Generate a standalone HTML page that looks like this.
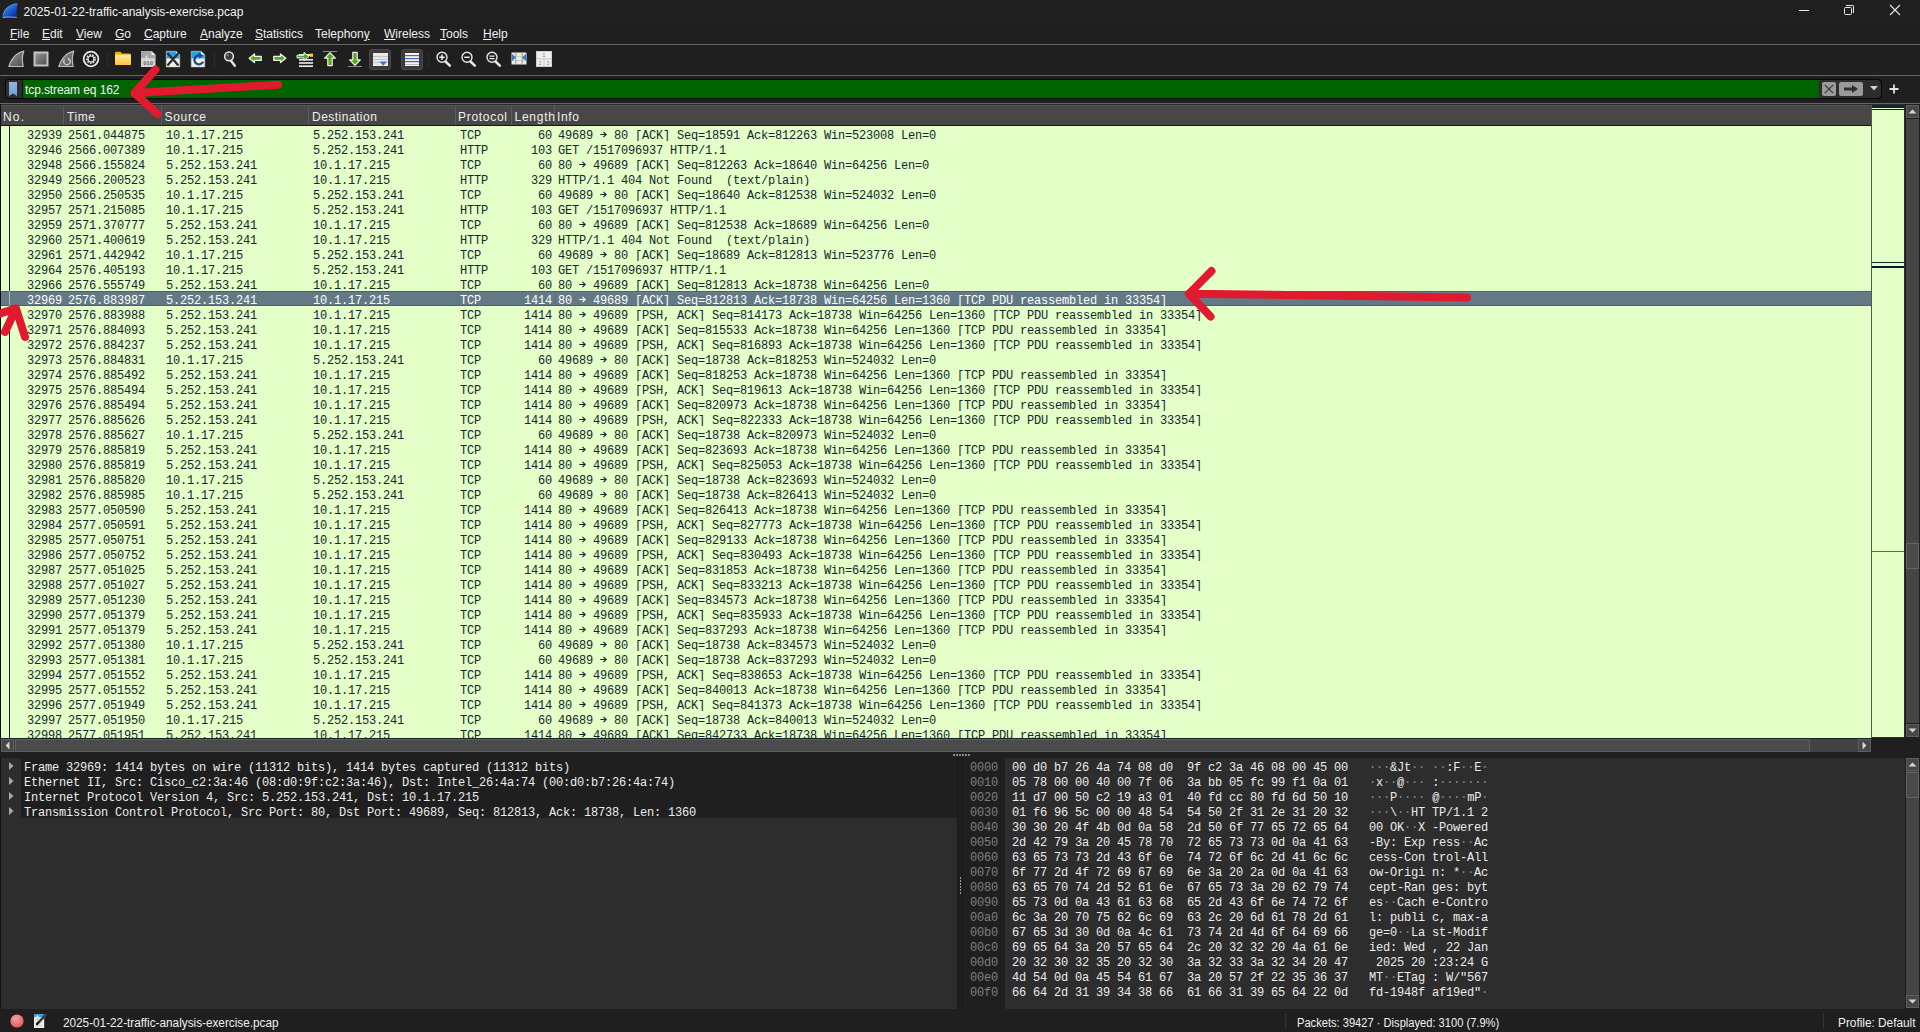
<!DOCTYPE html><html><head><meta charset="utf-8"><title>Wireshark</title><style>
*{margin:0;padding:0;box-sizing:border-box}
html,body{width:1920px;height:1032px;overflow:hidden;background:#1f1f1f}
body{position:relative;font-family:"Liberation Sans",sans-serif;font-size:12px;color:#e6e6e6}
.a{position:absolute}
.t{position:absolute;white-space:pre;line-height:15px}
.mn{font-family:"Liberation Mono",monospace;font-size:12px;letter-spacing:-0.2px}
.menu span{position:absolute;top:24px;line-height:20px;white-space:pre;color:#f0f0f0}
.menu span b{font-weight:normal;text-decoration:underline;text-underline-offset:1px}
.hd{position:absolute;top:106px;height:20px;line-height:22px;white-space:pre;color:#f0f0f0}
.hs{position:absolute;top:105px;width:1px;height:20px;background:#5c5c5c}
.r{position:absolute;left:1px;width:1870px;height:15px;background:#e4ffc7;color:#12272e;font-family:"Liberation Mono",monospace;font-size:12px;letter-spacing:-0.2px;line-height:15px;white-space:pre}
.r i{position:absolute;top:3px;font-style:normal}
.r .R{text-align:right}
.sel{background:#637985;color:#fff;box-shadow:inset 0 1px 0 #4c5f6e,inset 0 -1px 0 #4c5f6e}
.hx{position:absolute;white-space:pre;line-height:15px;font-family:"Liberation Mono",monospace;font-size:12px;letter-spacing:-0.2px;margin-top:3px}
.dot{color:#8a8a8a}
</style></head><body><div class="a" style="left:0;top:0;width:1920px;height:24px;background:#202020"></div><svg class="a" style="left:0;top:0" width="20" height="20" viewBox="0 0 20 20"><defs><linearGradient id="fin" x1="0.1" y1="0.1" x2="0.7" y2="0.9"><stop offset="0" stop-color="#3f95ff"/><stop offset="1" stop-color="#0736a8"/></linearGradient></defs><path d="M2.3 17.8 C2.8 10.5 7 4.2 17.8 3.2 C16.6 7 16.3 12 16.9 17.8 Z" fill="url(#fin)"/><path d="M2.8 17.4 C7 16.9 12 16.9 16.8 17.4" stroke="#9cc4ff" stroke-width="1" fill="none" opacity=".8"/><path d="M3.2 15.5 C4 10 8 5 16.5 3.8" stroke="#7fb6ff" stroke-width=".8" fill="none" opacity=".6"/></svg><div class="t" style="left:23.5px;top:4px;line-height:16px;color:#f2f2f2">2025-01-22-traffic-analysis-exercise.pcap</div><div class="a" style="left:1799px;top:10px;width:10px;height:1px;background:#e8e8e8"></div><div class="a" style="left:1844px;top:7px;width:8px;height:8px;border:1px solid #e8e8e8;border-radius:1.5px"></div><div class="a" style="left:1846px;top:5px;width:8px;height:8px;border-top:1px solid #e8e8e8;border-right:1px solid #e8e8e8;border-radius:0 2px 0 0"></div><svg class="a" style="left:1889px;top:4px" width="12" height="12" viewBox="0 0 12 12"><path d="M1 1 L11 11 M11 1 L1 11" stroke="#e8e8e8" stroke-width="1.1"/></svg><div class="menu"><span style="left:10px"><b>F</b>ile</span><span style="left:42px"><b>E</b>dit</span><span style="left:76px"><b>V</b>iew</span><span style="left:115px"><b>G</b>o</span><span style="left:144px"><b>C</b>apture</span><span style="left:200px"><b>A</b>nalyze</span><span style="left:255px"><b>S</b>tatistics</span><span style="left:315px">Telephon<b>y</b></span><span style="left:384px"><b>W</b>ireless</span><span style="left:440px"><b>T</b>ools</span><span style="left:483px"><b>H</b>elp</span></div><div class="a" style="left:0;top:44px;width:1920px;height:1px;background:#666"></div><div class="a" style="left:0;top:75px;width:1920px;height:1px;background:#666"></div><div class="a" style="left:0;top:103px;width:1920px;height:1px;background:#666"></div><svg class="a" style="left:7px;top:50px" width="18" height="18" viewBox="0 0 18 18"><defs><linearGradient id="g1" x1="0" y1="0" x2="1" y2="1"><stop offset="0" stop-color="#9a9a9a"/><stop offset="1" stop-color="#4c4c4c"/></linearGradient><linearGradient id="gy" x1="0" y1="0" x2="0" y2="1"><stop offset="0" stop-color="#ffe9a8"/><stop offset="1" stop-color="#fdc43c"/></linearGradient><linearGradient id="gd" x1="0" y1="0" x2="0" y2="1"><stop offset="0" stop-color="#9c9c9c"/><stop offset="1" stop-color="#d8d8d8"/></linearGradient></defs><path d="M1.8 16.5 C3.5 10 8.5 3 16.8 1 C15 6 15 11.5 16.2 16.5 Z" fill="url(#g1)" stroke="#bdbdbd" stroke-width="1.2" stroke-linejoin="round"/></svg><svg class="a" style="left:33px;top:51px" width="16" height="16" viewBox="0 0 16 16"><rect x="1.5" y="1.5" width="13" height="13" fill="url(#g1)" stroke="#c4c4c4" stroke-width="2"/></svg><svg class="a" style="left:57px;top:50px" width="18" height="18" viewBox="0 0 18 18"><path d="M1.8 16.5 C3.5 10 8.5 3 16.8 1 C15 6 15 11.5 16.2 16.5 Z" fill="url(#g1)" stroke="#bdbdbd" stroke-width="1.2" stroke-linejoin="round"/><path d="M7.5 9.5 A3.2 3.2 0 1 0 12 9" fill="none" stroke="#c8c8c8" stroke-width="1.3"/><path d="M10.5 7.5 L12.8 8.7 L11.3 10.8Z" fill="#c8c8c8"/></svg><svg class="a" style="left:82px;top:50px" width="18" height="18" viewBox="0 0 18 18"><circle cx="9" cy="9" r="7.3" fill="none" stroke="#e8e8e8" stroke-width="1.8"/><circle cx="9" cy="9" r="3.9" fill="none" stroke="#e0e0e0" stroke-width="2.2" stroke-dasharray="1.6 1.1"/><circle cx="9" cy="9" r="3" fill="none" stroke="#e0e0e0" stroke-width="1.2"/><circle cx="9" cy="9" r="1.6" fill="#111"/></svg><div class="a" style="left:107px;top:52px;width:1px;height:16px;background:#2c2c2c"></div><svg class="a" style="left:114px;top:51px" width="18" height="15" viewBox="0 0 18 15"><path d="M1 2 Q1 0.8 2.2 0.8 L6.5 0.8 L8 2.6 L15.8 2.6 Q17 2.6 17 3.8 L17 12.8 Q17 14 15.8 14 L2.2 14 Q1 14 1 12.8Z" fill="#f1b00a"/><path d="M1 4.6 Q1 3.7 2 3.7 L16 3.7 Q17 3.7 17 4.6 L17 12.8 Q17 14 15.8 14 L2.2 14 Q1 14 1 12.8Z" fill="url(#gy)"/></svg><svg class="a" style="left:140px;top:50px" width="17" height="18" viewBox="0 0 17 18"><path d="M1 1 L11.5 1 L15.5 5 L15.5 17 L1 17Z" fill="#d6d6d6"/><path d="M1 1 L11.5 1 L15.5 5 L15.5 8.2 L1 8.2Z" fill="#a6a6a6"/><path d="M5 8.2 L7 4.5 L7.6 8.2Z" fill="#e4e4e4"/><path d="M11.5 1 L11.5 5 L15.5 5Z" fill="#ececec"/><text x="8.2" y="14.6" font-family="Liberation Mono" font-weight="bold" font-size="5.6" fill="#6e6e6e" text-anchor="middle">010</text></svg><svg class="a" style="left:165px;top:50px" width="16" height="18" viewBox="0 0 16 18"><path d="M1.2 1.2 L11 1.2 L14.8 5 L14.8 17 L1.2 17Z" fill="#f3f1e2" stroke="#bcb9a6" stroke-width=".5"/><path d="M1.4 1.4 L11 1.4 L14.6 5 L14.6 8.6 L1.4 8.6Z" fill="#2d9fe8"/><path d="M11 1.3 L11 5 L14.7 5Z" fill="#f6f4ea"/><path d="M2.4 3 L13.4 15.6 M13.4 3 L2.4 15.6" stroke="#2e2e2e" stroke-width="2.3"/></svg><svg class="a" style="left:190px;top:50px" width="16" height="18" viewBox="0 0 16 18"><path d="M1.2 1.2 L11 1.2 L14.8 5 L14.8 17 L1.2 17Z" fill="#f3f1e2" stroke="#bcb9a6" stroke-width=".5"/><path d="M1.4 1.4 L11 1.4 L14.6 5 L14.6 8.6 L1.4 8.6Z" fill="#2d9fe8"/><path d="M11 1.3 L11 5 L14.7 5Z" fill="#f6f4ea"/><path d="M10.5 5.8 A4.4 4.4 0 1 0 13 11.6" fill="none" stroke="#1b449f" stroke-width="2.4"/><path d="M8.3 2.6 L13.2 5.2 L9.6 8.6Z" fill="#1b449f"/></svg><div class="a" style="left:214px;top:52px;width:1px;height:16px;background:#2c2c2c"></div><svg class="a" style="left:223px;top:50px" width="14" height="18" viewBox="0 0 14 18"><path d="M7.5 10 L11.8 15.8" stroke="#e6e6e6" stroke-width="2.4" stroke-linecap="round"/><circle cx="6" cy="6.3" r="4.4" fill="#3a3a3a" stroke="#e8e8e8" stroke-width="1.5"/><circle cx="4.8" cy="5.2" r="1.2" fill="#777"/></svg><svg class="a" style="left:248px;top:53px" width="15" height="11" viewBox="0 0 15 11"><path d="M1.2 5.2 L6.5 0.9 L6.5 3.3 L13.2 3.3 L13.2 7.4 L6.5 7.4 L6.5 9.6Z" fill="#55a81c" stroke="#f2f2f2" stroke-width="1.3" stroke-linejoin="round"/></svg><svg class="a" style="left:272px;top:53px" width="15" height="11" viewBox="0 0 15 11"><g transform="translate(15,0) scale(-1,1)"><path d="M1.2 5.2 L6.5 0.9 L6.5 3.3 L13.2 3.3 L13.2 7.4 L6.5 7.4 L6.5 9.6Z" fill="#55a81c" stroke="#f2f2f2" stroke-width="1.3" stroke-linejoin="round"/></g></svg><svg class="a" style="left:296px;top:51px" width="18" height="17" viewBox="0 0 18 17"><rect x="3" y="3" width="14" height="2" fill="#eee"/><rect x="3" y="8" width="14" height="1.6" fill="#eee"/><rect x="3" y="11.2" width="14" height="1.6" fill="#eee"/><rect x="3" y="14.4" width="14" height="1.6" fill="#eee"/><rect x="13.8" y="2.6" width="3.2" height="3.2" fill="#f6d21c"/><path d="M1 4.2 L8 4.2 L8 1.3 L13 5.5 L8 9.7 L8 6.9 L1 6.9Z" fill="#55a81c" stroke="#f2f2f2" stroke-width="1" stroke-linejoin="round"/></svg><svg class="a" style="left:322px;top:51px" width="16" height="16" viewBox="0 0 16 16"><rect x="1" y="0" width="14" height="1" fill="#8a8a8a"/><path d="M8 1.6 L13.3 7.2 L10.2 7.2 L10.2 14.6 L5.8 14.6 L5.8 7.2 L2.7 7.2Z" fill="#55a81c" stroke="#f2f2f2" stroke-width="1.2" stroke-linejoin="round"/></svg><svg class="a" style="left:347px;top:51px" width="16" height="16" viewBox="0 0 16 16"><rect x="1" y="15" width="14" height="1" fill="#8a8a8a"/><path d="M8 14.4 L13.3 8.8 L10.2 8.8 L10.2 1.4 L5.8 1.4 L5.8 8.8 L2.7 8.8Z" fill="#55a81c" stroke="#f2f2f2" stroke-width="1.2" stroke-linejoin="round"/></svg><div class="a" style="left:369px;top:49px;width:22px;height:21px;background:#3b3b3b;border:1px solid #4b4b4b;border-radius:3px"></div><svg class="a" style="left:373px;top:53px" width="15" height="13" viewBox="0 0 15 13"><rect x="0" y="0" width="15" height="13" fill="#e9e9e9"/><rect x="0" y="3" width="15" height=".8" fill="#bcbcbc"/><rect x="0" y="6" width="15" height=".8" fill="#bcbcbc"/><rect x="0" y="9" width="15" height=".8" fill="#bcbcbc"/><path d="M6.5 8.5 L14 8.5 L10.2 12.8Z" fill="#3a78c9"/></svg><div class="a" style="left:401px;top:49px;width:22px;height:21px;background:#3b3b3b;border:1px solid #4b4b4b;border-radius:3px"></div><svg class="a" style="left:405px;top:53px" width="14" height="13" viewBox="0 0 14 13"><rect x="0" y="0" width="14" height="13" fill="#f4f4f4"/><rect x="0" y="2" width="14" height="1.2" fill="#e03030"/><rect x="0" y="5" width="14" height="1.2" fill="#3a6fc8"/><rect x="0" y="8" width="14" height="1.2" fill="#7a4a9a"/><rect x="0" y="11" width="14" height="1" fill="#bbb"/></svg><div class="a" style="left:428px;top:52px;width:1px;height:16px;background:#2c2c2c"></div><svg class="a" style="left:436px;top:51px" width="16" height="16" viewBox="0 0 16 16"><path d="M8.5 9.5 L13.8 14.6" stroke="#e8e8e8" stroke-width="2.6" stroke-linecap="round"/><circle cx="6" cy="6.3" r="5" fill="#1f1f1f" stroke="#e8e8e8" stroke-width="1.4"/><path d="M3.3 6.3 L8.7 6.3 M6 3.6 L6 9" stroke="#eee" stroke-width="1.5"/></svg><svg class="a" style="left:461px;top:51px" width="16" height="16" viewBox="0 0 16 16"><path d="M8.5 9.5 L13.8 14.6" stroke="#e8e8e8" stroke-width="2.6" stroke-linecap="round"/><circle cx="6" cy="6.3" r="5" fill="#1f1f1f" stroke="#e8e8e8" stroke-width="1.4"/><path d="M3.3 6.3 L8.7 6.3" stroke="#eee" stroke-width="1.5"/></svg><svg class="a" style="left:486px;top:51px" width="16" height="16" viewBox="0 0 16 16"><path d="M8.5 9.5 L13.8 14.6" stroke="#e8e8e8" stroke-width="2.6" stroke-linecap="round"/><circle cx="6" cy="6.3" r="5" fill="#1f1f1f" stroke="#e8e8e8" stroke-width="1.4"/><path d="M3.5 5.2 L8.5 5.2 M3.5 7.6 L8.5 7.6" stroke="#eee" stroke-width="1.2"/></svg><svg class="a" style="left:511px;top:52px" width="16" height="13" viewBox="0 0 16 13"><rect x="0.5" y="0.5" width="15" height="12" fill="#eceae0"/><rect x="0.5" y="4" width="15" height=".7" fill="#c7c4b5"/><rect x="0.5" y="8" width="15" height=".7" fill="#c7c4b5"/><rect x="4.3" y="0" width="1" height="13" fill="#9a9a9a"/><rect x="10.7" y="0" width="1" height="13" fill="#9a9a9a"/><path d="M1 2 L5 5.5 L1 9Z" fill="#3a78c9"/><path d="M15 2 L11 5.5 L15 9Z" fill="#3a78c9"/></svg><svg class="a" style="left:536px;top:51px" width="16" height="16" viewBox="0 0 16 16"><rect x="0.5" y="0.5" width="15" height="15" fill="#efefef" stroke="#cfcfcf"/><rect x="0.5" y="7.5" width="15" height="0.8" fill="#bbb"/><rect x="7.6" y="8" width="0.8" height="8" fill="#bbb"/><text x="8" y="6" font-size="5" font-family="Liberation Sans" fill="#777" text-anchor="middle">1</text><text x="4" y="14" font-size="5" font-family="Liberation Sans" fill="#888" text-anchor="middle">2</text><text x="12" y="14" font-size="5" font-family="Liberation Sans" fill="#888" text-anchor="middle">3</text></svg><div class="a" style="left:5px;top:79px;width:1877px;height:20px;background:#080808;border-radius:4px"></div><div class="a" style="left:6px;top:80px;width:16px;height:18px;background:#2e2e2e;border-radius:3px 0 0 3px"></div><svg class="a" style="left:8px;top:81px" width="10" height="16" viewBox="0 0 10 16"><defs><linearGradient id="bm" x1="0" y1="0" x2="0" y2="1"><stop offset="0" stop-color="#8fb6e4"/><stop offset="1" stop-color="#6f9fd8"/></linearGradient></defs><path d="M1 1 L9 1 L9 15 L5 12.6 L1 15Z" fill="url(#bm)"/></svg><div class="a" style="left:23px;top:80px;width:1796px;height:18px;background:#006400"></div><div class="t" style="left:25px;top:82px;line-height:16px;color:#f4f4f4;letter-spacing:-0.1px">tcp.stream eq 162</div><div class="a" style="left:1819px;top:80px;width:62px;height:18px;background:#2c2c2c;border-radius:0 4px 4px 0"></div><div class="a" style="left:1822px;top:82px;width:14px;height:14px;background:#9a9a9a;border-radius:2px"></div><svg class="a" style="left:1824px;top:84px" width="10" height="10" viewBox="0 0 10 10"><path d="M.8 .8 L9.2 9.2 M9.2 .8 L.8 9.2" stroke="#3a3a3a" stroke-width="1.2"/></svg><div class="a" style="left:1839px;top:82px;width:24px;height:14px;background:#9a9a9a;border-radius:2px"></div><svg class="a" style="left:1843px;top:84px" width="16" height="10" viewBox="0 0 16 10"><path d="M1 3.5 L9 3.5 L9 1 L15 5 L9 9 L9 6.5 L1 6.5Z" fill="#2e2e2e"/></svg><svg class="a" style="left:1870px;top:86px" width="8" height="5" viewBox="0 0 8 5"><path d="M0 0 L8 0 L4 4.5Z" fill="#d0d0d0"/></svg><svg class="a" style="left:1889px;top:84px" width="10" height="10" viewBox="0 0 10 10"><path d="M5 .5 L5 9.5 M.5 5 L9.5 5" stroke="#e0e0e0" stroke-width="1.8"/></svg><div class="a" style="left:0;top:104px;width:1905px;height:635px;background:#2a2a2a"></div><div class="a" style="left:0;top:104px;width:1px;height:635px;background:#0d0d0d"></div><div class="a" style="left:1px;top:105px;width:1870px;height:20px;background:#474747"></div><div class="a" style="left:1px;top:125px;width:1870px;height:1px;background:#151515"></div><div class="a" style="left:1px;top:105px;width:1870px;height:1px;background:#545454"></div><div class="hs" style="left:63px"></div><div class="hs" style="left:161px"></div><div class="hs" style="left:308px"></div><div class="hs" style="left:455px"></div><div class="hs" style="left:511px"></div><div class="hs" style="left:554px"></div><div class="hd" style="left:3px;letter-spacing:1.2px">No.</div><div class="hd" style="left:67px;letter-spacing:0.6px">Time</div><div class="hd" style="left:164.5px;letter-spacing:0.7px">Source</div><div class="hd" style="left:312px;letter-spacing:0.48px">Destination</div><div class="hd" style="left:458px;letter-spacing:0.7px">Protocol</div><div class="hd" style="left:514.5px;letter-spacing:0.75px">Length</div><div class="hd" style="left:557px;letter-spacing:0.6px">Info</div><div class="r" style="top:126px"><i style="left:26px">32939</i><i style="left:67px">2561.044875</i><i style="left:165px">10.1.17.215</i><i style="left:312px">5.252.153.241</i><i style="left:459px">TCP</i><i class="R" style="right:1319px">60</i><i style="left:557px">49689 <svg width="7" height="7" viewBox="0 0 7 7" style="position:relative;top:-1px"><path d="M0.3 3.5 L6.3 3.5 M3.4 0.9 L6.2 3.5 L3.4 6.1" stroke="currentColor" stroke-width="1.1" fill="none"/></svg> 80 [ACK] Seq=18591 Ack=812263 Win=523008 Len=0</i></div><div class="r" style="top:141px"><i style="left:26px">32946</i><i style="left:67px">2566.007389</i><i style="left:165px">10.1.17.215</i><i style="left:312px">5.252.153.241</i><i style="left:459px">HTTP</i><i class="R" style="right:1319px">103</i><i style="left:557px">GET /1517096937 HTTP/1.1</i></div><div class="r" style="top:156px"><i style="left:26px">32948</i><i style="left:67px">2566.155824</i><i style="left:165px">5.252.153.241</i><i style="left:312px">10.1.17.215</i><i style="left:459px">TCP</i><i class="R" style="right:1319px">60</i><i style="left:557px">80 <svg width="7" height="7" viewBox="0 0 7 7" style="position:relative;top:-1px"><path d="M0.3 3.5 L6.3 3.5 M3.4 0.9 L6.2 3.5 L3.4 6.1" stroke="currentColor" stroke-width="1.1" fill="none"/></svg> 49689 [ACK] Seq=812263 Ack=18640 Win=64256 Len=0</i></div><div class="r" style="top:171px"><i style="left:26px">32949</i><i style="left:67px">2566.200523</i><i style="left:165px">5.252.153.241</i><i style="left:312px">10.1.17.215</i><i style="left:459px">HTTP</i><i class="R" style="right:1319px">329</i><i style="left:557px">HTTP/1.1 404 Not Found  (text/plain)</i></div><div class="r" style="top:186px"><i style="left:26px">32950</i><i style="left:67px">2566.250535</i><i style="left:165px">10.1.17.215</i><i style="left:312px">5.252.153.241</i><i style="left:459px">TCP</i><i class="R" style="right:1319px">60</i><i style="left:557px">49689 <svg width="7" height="7" viewBox="0 0 7 7" style="position:relative;top:-1px"><path d="M0.3 3.5 L6.3 3.5 M3.4 0.9 L6.2 3.5 L3.4 6.1" stroke="currentColor" stroke-width="1.1" fill="none"/></svg> 80 [ACK] Seq=18640 Ack=812538 Win=524032 Len=0</i></div><div class="r" style="top:201px"><i style="left:26px">32957</i><i style="left:67px">2571.215085</i><i style="left:165px">10.1.17.215</i><i style="left:312px">5.252.153.241</i><i style="left:459px">HTTP</i><i class="R" style="right:1319px">103</i><i style="left:557px">GET /1517096937 HTTP/1.1</i></div><div class="r" style="top:216px"><i style="left:26px">32959</i><i style="left:67px">2571.370777</i><i style="left:165px">5.252.153.241</i><i style="left:312px">10.1.17.215</i><i style="left:459px">TCP</i><i class="R" style="right:1319px">60</i><i style="left:557px">80 <svg width="7" height="7" viewBox="0 0 7 7" style="position:relative;top:-1px"><path d="M0.3 3.5 L6.3 3.5 M3.4 0.9 L6.2 3.5 L3.4 6.1" stroke="currentColor" stroke-width="1.1" fill="none"/></svg> 49689 [ACK] Seq=812538 Ack=18689 Win=64256 Len=0</i></div><div class="r" style="top:231px"><i style="left:26px">32960</i><i style="left:67px">2571.400619</i><i style="left:165px">5.252.153.241</i><i style="left:312px">10.1.17.215</i><i style="left:459px">HTTP</i><i class="R" style="right:1319px">329</i><i style="left:557px">HTTP/1.1 404 Not Found  (text/plain)</i></div><div class="r" style="top:246px"><i style="left:26px">32961</i><i style="left:67px">2571.442942</i><i style="left:165px">10.1.17.215</i><i style="left:312px">5.252.153.241</i><i style="left:459px">TCP</i><i class="R" style="right:1319px">60</i><i style="left:557px">49689 <svg width="7" height="7" viewBox="0 0 7 7" style="position:relative;top:-1px"><path d="M0.3 3.5 L6.3 3.5 M3.4 0.9 L6.2 3.5 L3.4 6.1" stroke="currentColor" stroke-width="1.1" fill="none"/></svg> 80 [ACK] Seq=18689 Ack=812813 Win=523776 Len=0</i></div><div class="r" style="top:261px"><i style="left:26px">32964</i><i style="left:67px">2576.405193</i><i style="left:165px">10.1.17.215</i><i style="left:312px">5.252.153.241</i><i style="left:459px">HTTP</i><i class="R" style="right:1319px">103</i><i style="left:557px">GET /1517096937 HTTP/1.1</i></div><div class="r" style="top:276px"><i style="left:26px">32966</i><i style="left:67px">2576.555749</i><i style="left:165px">5.252.153.241</i><i style="left:312px">10.1.17.215</i><i style="left:459px">TCP</i><i class="R" style="right:1319px">60</i><i style="left:557px">80 <svg width="7" height="7" viewBox="0 0 7 7" style="position:relative;top:-1px"><path d="M0.3 3.5 L6.3 3.5 M3.4 0.9 L6.2 3.5 L3.4 6.1" stroke="currentColor" stroke-width="1.1" fill="none"/></svg> 49689 [ACK] Seq=812813 Ack=18738 Win=64256 Len=0</i></div><div class="r sel" style="top:291px"><i style="left:26px">32969</i><i style="left:67px">2576.883987</i><i style="left:165px">5.252.153.241</i><i style="left:312px">10.1.17.215</i><i style="left:459px">TCP</i><i class="R" style="right:1319px">1414</i><i style="left:557px">80 <svg width="7" height="7" viewBox="0 0 7 7" style="position:relative;top:-1px"><path d="M0.3 3.5 L6.3 3.5 M3.4 0.9 L6.2 3.5 L3.4 6.1" stroke="currentColor" stroke-width="1.1" fill="none"/></svg> 49689 [ACK] Seq=812813 Ack=18738 Win=64256 Len=1360 [TCP PDU reassembled in 33354]</i></div><div class="r" style="top:306px"><i style="left:26px">32970</i><i style="left:67px">2576.883988</i><i style="left:165px">5.252.153.241</i><i style="left:312px">10.1.17.215</i><i style="left:459px">TCP</i><i class="R" style="right:1319px">1414</i><i style="left:557px">80 <svg width="7" height="7" viewBox="0 0 7 7" style="position:relative;top:-1px"><path d="M0.3 3.5 L6.3 3.5 M3.4 0.9 L6.2 3.5 L3.4 6.1" stroke="currentColor" stroke-width="1.1" fill="none"/></svg> 49689 [PSH, ACK] Seq=814173 Ack=18738 Win=64256 Len=1360 [TCP PDU reassembled in 33354]</i></div><div class="r" style="top:321px"><i style="left:26px">32971</i><i style="left:67px">2576.884093</i><i style="left:165px">5.252.153.241</i><i style="left:312px">10.1.17.215</i><i style="left:459px">TCP</i><i class="R" style="right:1319px">1414</i><i style="left:557px">80 <svg width="7" height="7" viewBox="0 0 7 7" style="position:relative;top:-1px"><path d="M0.3 3.5 L6.3 3.5 M3.4 0.9 L6.2 3.5 L3.4 6.1" stroke="currentColor" stroke-width="1.1" fill="none"/></svg> 49689 [ACK] Seq=815533 Ack=18738 Win=64256 Len=1360 [TCP PDU reassembled in 33354]</i></div><div class="r" style="top:336px"><i style="left:26px">32972</i><i style="left:67px">2576.884237</i><i style="left:165px">5.252.153.241</i><i style="left:312px">10.1.17.215</i><i style="left:459px">TCP</i><i class="R" style="right:1319px">1414</i><i style="left:557px">80 <svg width="7" height="7" viewBox="0 0 7 7" style="position:relative;top:-1px"><path d="M0.3 3.5 L6.3 3.5 M3.4 0.9 L6.2 3.5 L3.4 6.1" stroke="currentColor" stroke-width="1.1" fill="none"/></svg> 49689 [PSH, ACK] Seq=816893 Ack=18738 Win=64256 Len=1360 [TCP PDU reassembled in 33354]</i></div><div class="r" style="top:351px"><i style="left:26px">32973</i><i style="left:67px">2576.884831</i><i style="left:165px">10.1.17.215</i><i style="left:312px">5.252.153.241</i><i style="left:459px">TCP</i><i class="R" style="right:1319px">60</i><i style="left:557px">49689 <svg width="7" height="7" viewBox="0 0 7 7" style="position:relative;top:-1px"><path d="M0.3 3.5 L6.3 3.5 M3.4 0.9 L6.2 3.5 L3.4 6.1" stroke="currentColor" stroke-width="1.1" fill="none"/></svg> 80 [ACK] Seq=18738 Ack=818253 Win=524032 Len=0</i></div><div class="r" style="top:366px"><i style="left:26px">32974</i><i style="left:67px">2576.885492</i><i style="left:165px">5.252.153.241</i><i style="left:312px">10.1.17.215</i><i style="left:459px">TCP</i><i class="R" style="right:1319px">1414</i><i style="left:557px">80 <svg width="7" height="7" viewBox="0 0 7 7" style="position:relative;top:-1px"><path d="M0.3 3.5 L6.3 3.5 M3.4 0.9 L6.2 3.5 L3.4 6.1" stroke="currentColor" stroke-width="1.1" fill="none"/></svg> 49689 [ACK] Seq=818253 Ack=18738 Win=64256 Len=1360 [TCP PDU reassembled in 33354]</i></div><div class="r" style="top:381px"><i style="left:26px">32975</i><i style="left:67px">2576.885494</i><i style="left:165px">5.252.153.241</i><i style="left:312px">10.1.17.215</i><i style="left:459px">TCP</i><i class="R" style="right:1319px">1414</i><i style="left:557px">80 <svg width="7" height="7" viewBox="0 0 7 7" style="position:relative;top:-1px"><path d="M0.3 3.5 L6.3 3.5 M3.4 0.9 L6.2 3.5 L3.4 6.1" stroke="currentColor" stroke-width="1.1" fill="none"/></svg> 49689 [PSH, ACK] Seq=819613 Ack=18738 Win=64256 Len=1360 [TCP PDU reassembled in 33354]</i></div><div class="r" style="top:396px"><i style="left:26px">32976</i><i style="left:67px">2576.885494</i><i style="left:165px">5.252.153.241</i><i style="left:312px">10.1.17.215</i><i style="left:459px">TCP</i><i class="R" style="right:1319px">1414</i><i style="left:557px">80 <svg width="7" height="7" viewBox="0 0 7 7" style="position:relative;top:-1px"><path d="M0.3 3.5 L6.3 3.5 M3.4 0.9 L6.2 3.5 L3.4 6.1" stroke="currentColor" stroke-width="1.1" fill="none"/></svg> 49689 [ACK] Seq=820973 Ack=18738 Win=64256 Len=1360 [TCP PDU reassembled in 33354]</i></div><div class="r" style="top:411px"><i style="left:26px">32977</i><i style="left:67px">2576.885626</i><i style="left:165px">5.252.153.241</i><i style="left:312px">10.1.17.215</i><i style="left:459px">TCP</i><i class="R" style="right:1319px">1414</i><i style="left:557px">80 <svg width="7" height="7" viewBox="0 0 7 7" style="position:relative;top:-1px"><path d="M0.3 3.5 L6.3 3.5 M3.4 0.9 L6.2 3.5 L3.4 6.1" stroke="currentColor" stroke-width="1.1" fill="none"/></svg> 49689 [PSH, ACK] Seq=822333 Ack=18738 Win=64256 Len=1360 [TCP PDU reassembled in 33354]</i></div><div class="r" style="top:426px"><i style="left:26px">32978</i><i style="left:67px">2576.885627</i><i style="left:165px">10.1.17.215</i><i style="left:312px">5.252.153.241</i><i style="left:459px">TCP</i><i class="R" style="right:1319px">60</i><i style="left:557px">49689 <svg width="7" height="7" viewBox="0 0 7 7" style="position:relative;top:-1px"><path d="M0.3 3.5 L6.3 3.5 M3.4 0.9 L6.2 3.5 L3.4 6.1" stroke="currentColor" stroke-width="1.1" fill="none"/></svg> 80 [ACK] Seq=18738 Ack=820973 Win=524032 Len=0</i></div><div class="r" style="top:441px"><i style="left:26px">32979</i><i style="left:67px">2576.885819</i><i style="left:165px">5.252.153.241</i><i style="left:312px">10.1.17.215</i><i style="left:459px">TCP</i><i class="R" style="right:1319px">1414</i><i style="left:557px">80 <svg width="7" height="7" viewBox="0 0 7 7" style="position:relative;top:-1px"><path d="M0.3 3.5 L6.3 3.5 M3.4 0.9 L6.2 3.5 L3.4 6.1" stroke="currentColor" stroke-width="1.1" fill="none"/></svg> 49689 [ACK] Seq=823693 Ack=18738 Win=64256 Len=1360 [TCP PDU reassembled in 33354]</i></div><div class="r" style="top:456px"><i style="left:26px">32980</i><i style="left:67px">2576.885819</i><i style="left:165px">5.252.153.241</i><i style="left:312px">10.1.17.215</i><i style="left:459px">TCP</i><i class="R" style="right:1319px">1414</i><i style="left:557px">80 <svg width="7" height="7" viewBox="0 0 7 7" style="position:relative;top:-1px"><path d="M0.3 3.5 L6.3 3.5 M3.4 0.9 L6.2 3.5 L3.4 6.1" stroke="currentColor" stroke-width="1.1" fill="none"/></svg> 49689 [PSH, ACK] Seq=825053 Ack=18738 Win=64256 Len=1360 [TCP PDU reassembled in 33354]</i></div><div class="r" style="top:471px"><i style="left:26px">32981</i><i style="left:67px">2576.885820</i><i style="left:165px">10.1.17.215</i><i style="left:312px">5.252.153.241</i><i style="left:459px">TCP</i><i class="R" style="right:1319px">60</i><i style="left:557px">49689 <svg width="7" height="7" viewBox="0 0 7 7" style="position:relative;top:-1px"><path d="M0.3 3.5 L6.3 3.5 M3.4 0.9 L6.2 3.5 L3.4 6.1" stroke="currentColor" stroke-width="1.1" fill="none"/></svg> 80 [ACK] Seq=18738 Ack=823693 Win=524032 Len=0</i></div><div class="r" style="top:486px"><i style="left:26px">32982</i><i style="left:67px">2576.885985</i><i style="left:165px">10.1.17.215</i><i style="left:312px">5.252.153.241</i><i style="left:459px">TCP</i><i class="R" style="right:1319px">60</i><i style="left:557px">49689 <svg width="7" height="7" viewBox="0 0 7 7" style="position:relative;top:-1px"><path d="M0.3 3.5 L6.3 3.5 M3.4 0.9 L6.2 3.5 L3.4 6.1" stroke="currentColor" stroke-width="1.1" fill="none"/></svg> 80 [ACK] Seq=18738 Ack=826413 Win=524032 Len=0</i></div><div class="r" style="top:501px"><i style="left:26px">32983</i><i style="left:67px">2577.050590</i><i style="left:165px">5.252.153.241</i><i style="left:312px">10.1.17.215</i><i style="left:459px">TCP</i><i class="R" style="right:1319px">1414</i><i style="left:557px">80 <svg width="7" height="7" viewBox="0 0 7 7" style="position:relative;top:-1px"><path d="M0.3 3.5 L6.3 3.5 M3.4 0.9 L6.2 3.5 L3.4 6.1" stroke="currentColor" stroke-width="1.1" fill="none"/></svg> 49689 [ACK] Seq=826413 Ack=18738 Win=64256 Len=1360 [TCP PDU reassembled in 33354]</i></div><div class="r" style="top:516px"><i style="left:26px">32984</i><i style="left:67px">2577.050591</i><i style="left:165px">5.252.153.241</i><i style="left:312px">10.1.17.215</i><i style="left:459px">TCP</i><i class="R" style="right:1319px">1414</i><i style="left:557px">80 <svg width="7" height="7" viewBox="0 0 7 7" style="position:relative;top:-1px"><path d="M0.3 3.5 L6.3 3.5 M3.4 0.9 L6.2 3.5 L3.4 6.1" stroke="currentColor" stroke-width="1.1" fill="none"/></svg> 49689 [PSH, ACK] Seq=827773 Ack=18738 Win=64256 Len=1360 [TCP PDU reassembled in 33354]</i></div><div class="r" style="top:531px"><i style="left:26px">32985</i><i style="left:67px">2577.050751</i><i style="left:165px">5.252.153.241</i><i style="left:312px">10.1.17.215</i><i style="left:459px">TCP</i><i class="R" style="right:1319px">1414</i><i style="left:557px">80 <svg width="7" height="7" viewBox="0 0 7 7" style="position:relative;top:-1px"><path d="M0.3 3.5 L6.3 3.5 M3.4 0.9 L6.2 3.5 L3.4 6.1" stroke="currentColor" stroke-width="1.1" fill="none"/></svg> 49689 [ACK] Seq=829133 Ack=18738 Win=64256 Len=1360 [TCP PDU reassembled in 33354]</i></div><div class="r" style="top:546px"><i style="left:26px">32986</i><i style="left:67px">2577.050752</i><i style="left:165px">5.252.153.241</i><i style="left:312px">10.1.17.215</i><i style="left:459px">TCP</i><i class="R" style="right:1319px">1414</i><i style="left:557px">80 <svg width="7" height="7" viewBox="0 0 7 7" style="position:relative;top:-1px"><path d="M0.3 3.5 L6.3 3.5 M3.4 0.9 L6.2 3.5 L3.4 6.1" stroke="currentColor" stroke-width="1.1" fill="none"/></svg> 49689 [PSH, ACK] Seq=830493 Ack=18738 Win=64256 Len=1360 [TCP PDU reassembled in 33354]</i></div><div class="r" style="top:561px"><i style="left:26px">32987</i><i style="left:67px">2577.051025</i><i style="left:165px">5.252.153.241</i><i style="left:312px">10.1.17.215</i><i style="left:459px">TCP</i><i class="R" style="right:1319px">1414</i><i style="left:557px">80 <svg width="7" height="7" viewBox="0 0 7 7" style="position:relative;top:-1px"><path d="M0.3 3.5 L6.3 3.5 M3.4 0.9 L6.2 3.5 L3.4 6.1" stroke="currentColor" stroke-width="1.1" fill="none"/></svg> 49689 [ACK] Seq=831853 Ack=18738 Win=64256 Len=1360 [TCP PDU reassembled in 33354]</i></div><div class="r" style="top:576px"><i style="left:26px">32988</i><i style="left:67px">2577.051027</i><i style="left:165px">5.252.153.241</i><i style="left:312px">10.1.17.215</i><i style="left:459px">TCP</i><i class="R" style="right:1319px">1414</i><i style="left:557px">80 <svg width="7" height="7" viewBox="0 0 7 7" style="position:relative;top:-1px"><path d="M0.3 3.5 L6.3 3.5 M3.4 0.9 L6.2 3.5 L3.4 6.1" stroke="currentColor" stroke-width="1.1" fill="none"/></svg> 49689 [PSH, ACK] Seq=833213 Ack=18738 Win=64256 Len=1360 [TCP PDU reassembled in 33354]</i></div><div class="r" style="top:591px"><i style="left:26px">32989</i><i style="left:67px">2577.051230</i><i style="left:165px">5.252.153.241</i><i style="left:312px">10.1.17.215</i><i style="left:459px">TCP</i><i class="R" style="right:1319px">1414</i><i style="left:557px">80 <svg width="7" height="7" viewBox="0 0 7 7" style="position:relative;top:-1px"><path d="M0.3 3.5 L6.3 3.5 M3.4 0.9 L6.2 3.5 L3.4 6.1" stroke="currentColor" stroke-width="1.1" fill="none"/></svg> 49689 [ACK] Seq=834573 Ack=18738 Win=64256 Len=1360 [TCP PDU reassembled in 33354]</i></div><div class="r" style="top:606px"><i style="left:26px">32990</i><i style="left:67px">2577.051379</i><i style="left:165px">5.252.153.241</i><i style="left:312px">10.1.17.215</i><i style="left:459px">TCP</i><i class="R" style="right:1319px">1414</i><i style="left:557px">80 <svg width="7" height="7" viewBox="0 0 7 7" style="position:relative;top:-1px"><path d="M0.3 3.5 L6.3 3.5 M3.4 0.9 L6.2 3.5 L3.4 6.1" stroke="currentColor" stroke-width="1.1" fill="none"/></svg> 49689 [PSH, ACK] Seq=835933 Ack=18738 Win=64256 Len=1360 [TCP PDU reassembled in 33354]</i></div><div class="r" style="top:621px"><i style="left:26px">32991</i><i style="left:67px">2577.051379</i><i style="left:165px">5.252.153.241</i><i style="left:312px">10.1.17.215</i><i style="left:459px">TCP</i><i class="R" style="right:1319px">1414</i><i style="left:557px">80 <svg width="7" height="7" viewBox="0 0 7 7" style="position:relative;top:-1px"><path d="M0.3 3.5 L6.3 3.5 M3.4 0.9 L6.2 3.5 L3.4 6.1" stroke="currentColor" stroke-width="1.1" fill="none"/></svg> 49689 [ACK] Seq=837293 Ack=18738 Win=64256 Len=1360 [TCP PDU reassembled in 33354]</i></div><div class="r" style="top:636px"><i style="left:26px">32992</i><i style="left:67px">2577.051380</i><i style="left:165px">10.1.17.215</i><i style="left:312px">5.252.153.241</i><i style="left:459px">TCP</i><i class="R" style="right:1319px">60</i><i style="left:557px">49689 <svg width="7" height="7" viewBox="0 0 7 7" style="position:relative;top:-1px"><path d="M0.3 3.5 L6.3 3.5 M3.4 0.9 L6.2 3.5 L3.4 6.1" stroke="currentColor" stroke-width="1.1" fill="none"/></svg> 80 [ACK] Seq=18738 Ack=834573 Win=524032 Len=0</i></div><div class="r" style="top:651px"><i style="left:26px">32993</i><i style="left:67px">2577.051381</i><i style="left:165px">10.1.17.215</i><i style="left:312px">5.252.153.241</i><i style="left:459px">TCP</i><i class="R" style="right:1319px">60</i><i style="left:557px">49689 <svg width="7" height="7" viewBox="0 0 7 7" style="position:relative;top:-1px"><path d="M0.3 3.5 L6.3 3.5 M3.4 0.9 L6.2 3.5 L3.4 6.1" stroke="currentColor" stroke-width="1.1" fill="none"/></svg> 80 [ACK] Seq=18738 Ack=837293 Win=524032 Len=0</i></div><div class="r" style="top:666px"><i style="left:26px">32994</i><i style="left:67px">2577.051552</i><i style="left:165px">5.252.153.241</i><i style="left:312px">10.1.17.215</i><i style="left:459px">TCP</i><i class="R" style="right:1319px">1414</i><i style="left:557px">80 <svg width="7" height="7" viewBox="0 0 7 7" style="position:relative;top:-1px"><path d="M0.3 3.5 L6.3 3.5 M3.4 0.9 L6.2 3.5 L3.4 6.1" stroke="currentColor" stroke-width="1.1" fill="none"/></svg> 49689 [PSH, ACK] Seq=838653 Ack=18738 Win=64256 Len=1360 [TCP PDU reassembled in 33354]</i></div><div class="r" style="top:681px"><i style="left:26px">32995</i><i style="left:67px">2577.051552</i><i style="left:165px">5.252.153.241</i><i style="left:312px">10.1.17.215</i><i style="left:459px">TCP</i><i class="R" style="right:1319px">1414</i><i style="left:557px">80 <svg width="7" height="7" viewBox="0 0 7 7" style="position:relative;top:-1px"><path d="M0.3 3.5 L6.3 3.5 M3.4 0.9 L6.2 3.5 L3.4 6.1" stroke="currentColor" stroke-width="1.1" fill="none"/></svg> 49689 [ACK] Seq=840013 Ack=18738 Win=64256 Len=1360 [TCP PDU reassembled in 33354]</i></div><div class="r" style="top:696px"><i style="left:26px">32996</i><i style="left:67px">2577.051949</i><i style="left:165px">5.252.153.241</i><i style="left:312px">10.1.17.215</i><i style="left:459px">TCP</i><i class="R" style="right:1319px">1414</i><i style="left:557px">80 <svg width="7" height="7" viewBox="0 0 7 7" style="position:relative;top:-1px"><path d="M0.3 3.5 L6.3 3.5 M3.4 0.9 L6.2 3.5 L3.4 6.1" stroke="currentColor" stroke-width="1.1" fill="none"/></svg> 49689 [PSH, ACK] Seq=841373 Ack=18738 Win=64256 Len=1360 [TCP PDU reassembled in 33354]</i></div><div class="r" style="top:711px"><i style="left:26px">32997</i><i style="left:67px">2577.051950</i><i style="left:165px">10.1.17.215</i><i style="left:312px">5.252.153.241</i><i style="left:459px">TCP</i><i class="R" style="right:1319px">60</i><i style="left:557px">49689 <svg width="7" height="7" viewBox="0 0 7 7" style="position:relative;top:-1px"><path d="M0.3 3.5 L6.3 3.5 M3.4 0.9 L6.2 3.5 L3.4 6.1" stroke="currentColor" stroke-width="1.1" fill="none"/></svg> 80 [ACK] Seq=18738 Ack=840013 Win=524032 Len=0</i></div><div class="r" style="top:726px"><i style="left:26px">32998</i><i style="left:67px">2577.051951</i><i style="left:165px">5.252.153.241</i><i style="left:312px">10.1.17.215</i><i style="left:459px">TCP</i><i class="R" style="right:1319px">1414</i><i style="left:557px">80 <svg width="7" height="7" viewBox="0 0 7 7" style="position:relative;top:-1px"><path d="M0.3 3.5 L6.3 3.5 M3.4 0.9 L6.2 3.5 L3.4 6.1" stroke="currentColor" stroke-width="1.1" fill="none"/></svg> 49689 [ACK] Seq=842733 Ack=18738 Win=64256 Len=1360 [TCP PDU reassembled in 33354]</i></div><div class="a" style="left:0;top:738px;width:1905px;height:14px;background:#1f1f1f"></div><div class="a" style="left:9px;top:126px;width:1px;height:165px;background:#12272e"></div><div class="a" style="left:9px;top:291px;width:1px;height:15px;background:#a9b4bb"></div><div class="a" style="left:9px;top:306px;width:1px;height:432px;background:#12272e"></div><div class="a" style="left:555px;top:291px;width:1px;height:15px;background:#52677a"></div><div class="a" style="left:556px;top:292px;width:1315px;height:1px;background:#6a7f8c"></div><div class="a" style="left:556px;top:292px;width:1px;height:13px;background:#6a7f8c"></div><div class="a" style="left:1871px;top:105px;width:1px;height:633px;background:#555"></div><div class="a" style="left:1872px;top:105px;width:32px;height:632px;background:#e4ffc7"></div><div class="a" style="left:1904px;top:105px;width:2px;height:633px;background:#2a2a2a"></div><div class="a" style="left:1872px;top:105px;width:32px;height:3px;background:#13242e"></div><div class="a" style="left:1872px;top:109px;width:32px;height:1px;background:#0b2030"></div><div class="a" style="left:1872px;top:262px;width:32px;height:1px;background:#12272e"></div><div class="a" style="left:1872px;top:266px;width:32px;height:2px;background:#0b1e2a"></div><div class="a" style="left:1872px;top:551px;width:32px;height:1px;background:#50677a"></div><div class="a" style="left:1905px;top:104px;width:15px;height:635px;background:#1e1e1e"></div><div class="a" style="left:1906px;top:119px;width:13px;height:604px;background:#454545"></div><div class="a" style="left:1906px;top:105px;width:13px;height:13px;background:#474747;border:1px solid #5e5e5e"></div><svg class="a" style="left:1908px;top:109px" width="9" height="5" viewBox="0 0 9 5"><path d="M0.5 4.5 L4.5 0.5 L8.5 4.5Z" fill="#d4d4d4"/></svg><div class="a" style="left:1906px;top:543px;width:13px;height:26px;background:#4a4a4a;border:1px solid #646464"></div><div class="a" style="left:1906px;top:724px;width:13px;height:13px;background:#474747;border:1px solid #5e5e5e"></div><svg class="a" style="left:1908px;top:728px" width="9" height="5" viewBox="0 0 9 5"><path d="M0.5 0.5 L4.5 4.5 L8.5 0.5Z" fill="#d4d4d4"/></svg><div class="a" style="left:1px;top:739px;width:1870px;height:13px;background:#434343"></div><div class="a" style="left:1px;top:739px;width:13px;height:13px;background:#474747;border:1px solid #5e5e5e"></div><svg class="a" style="left:5px;top:741px" width="5" height="9" viewBox="0 0 5 9"><path d="M4.5 0.5 L0.5 4.5 L4.5 8.5Z" fill="#d4d4d4"/></svg><div class="a" style="left:15px;top:739px;width:1795px;height:13px;background:#4b4b4b;border:1px solid #5e5e5e"></div><div class="a" style="left:1858px;top:739px;width:13px;height:13px;background:#474747;border:1px solid #5e5e5e"></div><svg class="a" style="left:1862px;top:741px" width="5" height="9" viewBox="0 0 5 9"><path d="M0.5 0.5 L4.5 4.5 L0.5 8.5Z" fill="#d4d4d4"/></svg><div class="a" style="left:953px;top:754px;width:17px;height:2px;background:repeating-linear-gradient(90deg,#8a8a8a 0 2px,transparent 2px 3px)"></div><div class="a" style="left:0;top:758px;width:957px;height:251px;background:#2d2d2d;border-left:1px solid #111"></div><div class="a" style="left:957px;top:758px;width:1px;height:251px;background:#181818"></div><div class="a" style="left:21px;top:758px;width:936px;height:60px;background:#1f1f1f"></div><svg class="a" style="left:9px;top:762px" width="5" height="8" viewBox="0 0 5 8"><path d="M0 0 L4.5 4 L0 8Z" fill="#a9a9a9"/></svg><div class="t mn" style="left:24px;top:761px;color:#ededed">Frame 32969: 1414 bytes on wire (11312 bits), 1414 bytes captured (11312 bits)</div><svg class="a" style="left:9px;top:777px" width="5" height="8" viewBox="0 0 5 8"><path d="M0 0 L4.5 4 L0 8Z" fill="#a9a9a9"/></svg><div class="t mn" style="left:24px;top:776px;color:#ededed">Ethernet II, Src: Cisco_c2:3a:46 (08:d0:9f:c2:3a:46), Dst: Intel_26:4a:74 (00:d0:b7:26:4a:74)</div><svg class="a" style="left:9px;top:792px" width="5" height="8" viewBox="0 0 5 8"><path d="M0 0 L4.5 4 L0 8Z" fill="#a9a9a9"/></svg><div class="t mn" style="left:24px;top:791px;color:#ededed">Internet Protocol Version 4, Src: 5.252.153.241, Dst: 10.1.17.215</div><svg class="a" style="left:9px;top:807px" width="5" height="8" viewBox="0 0 5 8"><path d="M0 0 L4.5 4 L0 8Z" fill="#a9a9a9"/></svg><div class="t mn" style="left:24px;top:806px;color:#ededed">Transmission Control Protocol, Src Port: 80, Dst Port: 49689, Seq: 812813, Ack: 18738, Len: 1360</div><div class="a" style="left:958px;top:757px;width:4px;height:252px;background:#1f1f1f"></div><div class="a" style="left:960px;top:877px;width:1px;height:18px;background:repeating-linear-gradient(180deg,#9a9a9a 0 2px,transparent 2px 3px)"></div><div class="a" style="left:962px;top:758px;width:943px;height:251px;background:#2d2d2d"></div><div class="a" style="left:962px;top:758px;width:43px;height:251px;background:#1f1f1f;border-left:1px solid #181818"></div><div class="hx" style="left:970px;top:758px;color:#7f7f7f">0000</div><div class="hx" style="left:1012px;top:758px;color:#ececec">00 d0 b7 26 4a 74 08 d0  9f c2 3a 46 08 00 45 00</div><div class="hx" style="left:1369px;top:758px;color:#ececec"><span class="dot">·</span><span class="dot">·</span><span class="dot">·</span>&amp;Jt<span class="dot">·</span><span class="dot">·</span> <span class="dot">·</span><span class="dot">·</span>:F<span class="dot">·</span><span class="dot">·</span>E<span class="dot">·</span></div><div class="hx" style="left:970px;top:773px;color:#7f7f7f">0010</div><div class="hx" style="left:1012px;top:773px;color:#ececec">05 78 00 00 40 00 7f 06  3a bb 05 fc 99 f1 0a 01</div><div class="hx" style="left:1369px;top:773px;color:#ececec"><span class="dot">·</span>x<span class="dot">·</span><span class="dot">·</span>@<span class="dot">·</span><span class="dot">·</span><span class="dot">·</span> :<span class="dot">·</span><span class="dot">·</span><span class="dot">·</span><span class="dot">·</span><span class="dot">·</span><span class="dot">·</span><span class="dot">·</span></div><div class="hx" style="left:970px;top:788px;color:#7f7f7f">0020</div><div class="hx" style="left:1012px;top:788px;color:#ececec">11 d7 00 50 c2 19 a3 01  40 fd cc 80 fd 6d 50 10</div><div class="hx" style="left:1369px;top:788px;color:#ececec"><span class="dot">·</span><span class="dot">·</span><span class="dot">·</span>P<span class="dot">·</span><span class="dot">·</span><span class="dot">·</span><span class="dot">·</span> @<span class="dot">·</span><span class="dot">·</span><span class="dot">·</span><span class="dot">·</span>mP<span class="dot">·</span></div><div class="hx" style="left:970px;top:803px;color:#7f7f7f">0030</div><div class="hx" style="left:1012px;top:803px;color:#ececec">01 f6 96 5c 00 00 48 54  54 50 2f 31 2e 31 20 32</div><div class="hx" style="left:1369px;top:803px;color:#ececec"><span class="dot">·</span><span class="dot">·</span><span class="dot">·</span>\<span class="dot">·</span><span class="dot">·</span>HT TP/1.1 2</div><div class="hx" style="left:970px;top:818px;color:#7f7f7f">0040</div><div class="hx" style="left:1012px;top:818px;color:#ececec">30 30 20 4f 4b 0d 0a 58  2d 50 6f 77 65 72 65 64</div><div class="hx" style="left:1369px;top:818px;color:#ececec">00 OK<span class="dot">·</span><span class="dot">·</span>X -Powered</div><div class="hx" style="left:970px;top:833px;color:#7f7f7f">0050</div><div class="hx" style="left:1012px;top:833px;color:#ececec">2d 42 79 3a 20 45 78 70  72 65 73 73 0d 0a 41 63</div><div class="hx" style="left:1369px;top:833px;color:#ececec">-By: Exp ress<span class="dot">·</span><span class="dot">·</span>Ac</div><div class="hx" style="left:970px;top:848px;color:#7f7f7f">0060</div><div class="hx" style="left:1012px;top:848px;color:#ececec">63 65 73 73 2d 43 6f 6e  74 72 6f 6c 2d 41 6c 6c</div><div class="hx" style="left:1369px;top:848px;color:#ececec">cess-Con trol-All</div><div class="hx" style="left:970px;top:863px;color:#7f7f7f">0070</div><div class="hx" style="left:1012px;top:863px;color:#ececec">6f 77 2d 4f 72 69 67 69  6e 3a 20 2a 0d 0a 41 63</div><div class="hx" style="left:1369px;top:863px;color:#ececec">ow-Origi n: *<span class="dot">·</span><span class="dot">·</span>Ac</div><div class="hx" style="left:970px;top:878px;color:#7f7f7f">0080</div><div class="hx" style="left:1012px;top:878px;color:#ececec">63 65 70 74 2d 52 61 6e  67 65 73 3a 20 62 79 74</div><div class="hx" style="left:1369px;top:878px;color:#ececec">cept-Ran ges: byt</div><div class="hx" style="left:970px;top:893px;color:#7f7f7f">0090</div><div class="hx" style="left:1012px;top:893px;color:#ececec">65 73 0d 0a 43 61 63 68  65 2d 43 6f 6e 74 72 6f</div><div class="hx" style="left:1369px;top:893px;color:#ececec">es<span class="dot">·</span><span class="dot">·</span>Cach e-Contro</div><div class="hx" style="left:970px;top:908px;color:#7f7f7f">00a0</div><div class="hx" style="left:1012px;top:908px;color:#ececec">6c 3a 20 70 75 62 6c 69  63 2c 20 6d 61 78 2d 61</div><div class="hx" style="left:1369px;top:908px;color:#ececec">l: publi c, max-a</div><div class="hx" style="left:970px;top:923px;color:#7f7f7f">00b0</div><div class="hx" style="left:1012px;top:923px;color:#ececec">67 65 3d 30 0d 0a 4c 61  73 74 2d 4d 6f 64 69 66</div><div class="hx" style="left:1369px;top:923px;color:#ececec">ge=0<span class="dot">·</span><span class="dot">·</span>La st-Modif</div><div class="hx" style="left:970px;top:938px;color:#7f7f7f">00c0</div><div class="hx" style="left:1012px;top:938px;color:#ececec">69 65 64 3a 20 57 65 64  2c 20 32 32 20 4a 61 6e</div><div class="hx" style="left:1369px;top:938px;color:#ececec">ied: Wed , 22 Jan</div><div class="hx" style="left:970px;top:953px;color:#7f7f7f">00d0</div><div class="hx" style="left:1012px;top:953px;color:#ececec">20 32 30 32 35 20 32 30  3a 32 33 3a 32 34 20 47</div><div class="hx" style="left:1369px;top:953px;color:#ececec"> 2025 20 :23:24 G</div><div class="hx" style="left:970px;top:968px;color:#7f7f7f">00e0</div><div class="hx" style="left:1012px;top:968px;color:#ececec">4d 54 0d 0a 45 54 61 67  3a 20 57 2f 22 35 36 37</div><div class="hx" style="left:1369px;top:968px;color:#ececec">MT<span class="dot">·</span><span class="dot">·</span>ETag : W/"567</div><div class="hx" style="left:970px;top:983px;color:#7f7f7f">00f0</div><div class="hx" style="left:1012px;top:983px;color:#ececec">66 64 2d 31 39 34 38 66  61 66 31 39 65 64 22 0d</div><div class="hx" style="left:1369px;top:983px;color:#ececec">fd-1948f af19ed"<span class="dot">·</span></div><div class="a" style="left:1905px;top:757px;width:15px;height:252px;background:#1e1e1e"></div><div class="a" style="left:1906px;top:771px;width:13px;height:224px;background:#454545"></div><div class="a" style="left:1906px;top:758px;width:13px;height:13px;background:#474747;border:1px solid #5e5e5e"></div><svg class="a" style="left:1908px;top:762px" width="9" height="5" viewBox="0 0 9 5"><path d="M0.5 4.5 L4.5 0.5 L8.5 4.5Z" fill="#d4d4d4"/></svg><div class="a" style="left:1906px;top:772px;width:13px;height:26px;background:#4a4a4a;border:1px solid #646464"></div><div class="a" style="left:1906px;top:995px;width:13px;height:13px;background:#474747;border:1px solid #5e5e5e"></div><svg class="a" style="left:1908px;top:999px" width="9" height="5" viewBox="0 0 9 5"><path d="M0.5 0.5 L4.5 4.5 L8.5 0.5Z" fill="#d4d4d4"/></svg><div class="a" style="left:0;top:1009px;width:1920px;height:23px;background:#1f1f1f"></div><svg class="a" style="left:9px;top:1013px" width="16" height="16" viewBox="0 0 16 16"><defs><radialGradient id="rd" cx=".4" cy=".3" r=".75"><stop offset="0" stop-color="#f3a3a3"/><stop offset="1" stop-color="#e25656"/></radialGradient></defs><circle cx="8" cy="8" r="6.6" fill="url(#rd)"/></svg><svg class="a" style="left:33px;top:1013px" width="15" height="16" viewBox="0 0 15 16"><rect x="1" y="1" width="10.2" height="14" fill="#efede4"/><rect x="1" y="1" width="10.2" height="3.2" fill="#3a9ee0"/><path d="M3 3.8 L4.5 2 L6 3.8Z" fill="#fff"/><path d="M2.5 6.5 L6 6.5 M2.5 12.5 L9 12.5" stroke="#c8c8c8" stroke-width=".8"/><path d="M4.2 10.8 L12.6 2" stroke="#3c3c3c" stroke-width="2.6" stroke-linecap="round"/><path d="M3.8 11.3 L5.2 9.6" stroke="#111" stroke-width="1.6" stroke-linecap="round"/></svg><div class="t" style="left:63px;top:1015px;line-height:17px;color:#f0f0f0;transform:scaleX(0.98);transform-origin:0 0">2025-01-22-traffic-analysis-exercise.pcap</div><div class="a" style="left:1285px;top:1013px;width:1px;height:16px;background:#333"></div><div class="t" style="left:1297px;top:1015px;line-height:17px;color:#f0f0f0;transform:scaleX(0.927);transform-origin:0 0">Packets: 39427 · Displayed: 3100 (7.9%)</div><div class="a" style="left:1823px;top:1013px;width:1px;height:16px;background:#333"></div><div class="t" style="left:1838px;top:1015px;line-height:17px;color:#f0f0f0;transform:scaleX(0.985);transform-origin:0 0">Profile: Default</div><svg class="a" style="left:0;top:0" width="1920" height="1032" viewBox="0 0 1920 1032"><g stroke="#e11a2f" stroke-width="8" stroke-linecap="round" stroke-linejoin="round" fill="none"><path d="M278 84.8 L134.5 93 M155.5 69.5 L134.5 93 L157.5 114"/><path d="M1467 297.5 L1189 293.7 M1211.5 271 L1189 293.7 L1210.5 316.5"/><path d="M-8 316 L16 308.5 M5 332 L16 308.5 L25 337"/></g></svg></body></html>
